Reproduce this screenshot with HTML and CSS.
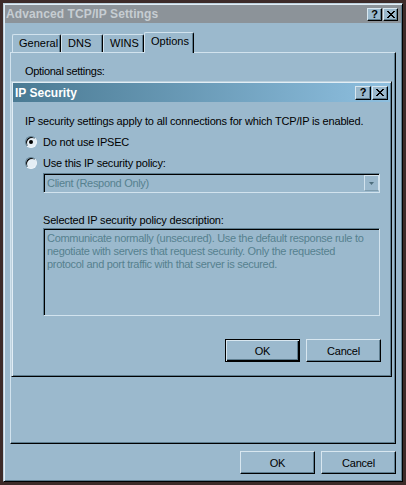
FILE: index.html
```html
<!DOCTYPE html>
<html>
<head>
<meta charset="utf-8">
<title>Advanced TCP/IP Settings</title>
<link rel="stylesheet" href="styles.css">
</head>
<body>
<div class="win main">
  <div class="titlebar">
    <span class="title">Advanced TCP/IP Settings</span>
    <div class="caps">
      <span class="cap">?</span>
      <span class="cap"><svg width="8" height="7" viewBox="0 0 8 7"><path d="M0 0h2v1h-2zM6 0h2v1h-2zM1 1h2v1h-2zM5 1h2v1h-2zM2 2h4v1h-4zM3 3h2v1h-2zM2 4h4v1h-4zM1 5h2v1h-2zM5 5h2v1h-2zM0 6h2v1h-2zM6 6h2v1h-2z" fill="#000"/></svg></span>
    </div>
  </div>
  <div class="tabs">
    <div class="tab t-general">General</div>
    <div class="tab t-dns">DNS</div>
    <div class="tab t-wins">WINS</div>
    <div class="tab t-options active">Options</div>
  </div>
  <div class="panel">
    <div class="line">Optional settings:</div>
  </div>
  <div class="footer">
    <button class="btn">OK</button>
    <button class="btn">Cancel</button>
  </div>
</div>

<div class="win dialog">
  <div class="titlebar">
    <span class="title">IP Security</span>
    <div class="caps">
      <span class="cap">?</span>
      <span class="cap"><svg width="8" height="7" viewBox="0 0 8 7"><path d="M0 0h2v1h-2zM6 0h2v1h-2zM1 1h2v1h-2zM5 1h2v1h-2zM2 2h4v1h-4zM3 3h2v1h-2zM2 4h4v1h-4zM1 5h2v1h-2zM5 5h2v1h-2zM0 6h2v1h-2zM6 6h2v1h-2z" fill="#000"/></svg></span>
    </div>
  </div>
  <div class="dbody">
    <div class="line wide">IP security settings apply to all connections for which TCP/IP is enabled.</div>
    <div class="radio-row first"><span class="radio on"></span><span>Do not use IPSEC</span></div>
    <div class="radio-row"><span class="radio"></span><span>Use this IP security policy:</span></div>
    <div class="combo">
      <span class="combo-text">Client (Respond Only)</span>
      <span class="combo-btn"><svg width="5" height="3" viewBox="0 0 5 3"><path d="M0 0h5l-2.5 3z" fill="#4d6d7c"/></svg></span>
    </div>
    <div class="line label wide">Selected IP security policy description:</div>
    <div class="desc">Communicate normally (unsecured). Use the default response rule to<br>negotiate with servers that request security. Only the requested<br>protocol and port traffic with that server is secured.</div>
    <div class="dbuttons">
      <button class="btn default">OK</button>
      <button class="btn">Cancel</button>
    </div>
  </div>
</div>
</body>
</html>
```

FILE: styles.css
```css
* { box-sizing: border-box; }
html, body { margin: 0; }
body {
  background: #3d2b29;
  padding: 3px;
  width: 406px;
  height: 485px;
  overflow: hidden;
  position: relative;
  font-family: "Liberation Sans", Arial, sans-serif;
  font-size: 11px;
  color: #000;
}

.win {
  background: #9bb9cd;
  border: 1px solid;
  border-color: #bcd0dc #000 #000 #bcd0dc;
  box-shadow: inset 1px 1px #e2eef6, inset -1px -1px #5e7d8f;
  padding: 1px;
}

.main {
  width: 400px;
  height: 479px;
  display: flex;
  flex-direction: column;
}

.titlebar {
  flex: none;
  height: 18px;
  display: flex;
  align-items: center;
  justify-content: space-between;
  padding: 0 3px 0 1px;
  background: #8c9399;
}
.title {
  font-weight: bold;
  font-size: 12px;
  line-height: 14px;
  color: #c6cdd2;
  white-space: nowrap;
  letter-spacing: 0.1px;
}

.caps { display: flex; gap: 1px; }
.cap {
  width: 15px;
  height: 13px;
  background: #9bb9cd;
  border: 1px solid;
  border-color: #d8e7f0 #000 #000 #d8e7f0;
  box-shadow: inset -1px -1px #5e7d8f;
  display: flex;
  align-items: center;
  justify-content: center;
  font-weight: bold;
  font-size: 11px;
  line-height: 11px;
  color: #000;
}

.tabs {
  flex: none;
  height: 20px;
  margin-top: 9px;
  padding-left: 7px;
  display: flex;
  align-items: flex-end;
  position: relative;
  z-index: 1;
}
.tab {
  height: 18px;
  background: #9bb9cd;
  border: 1px solid #d2e3ee;
  border-bottom: none;
  border-right-color: #000;
  box-shadow: inset -1px 0 #5e7d8f;
  border-radius: 2px 2px 0 0;
  padding: 0 0 0 6px;
  line-height: 16px;
  white-space: nowrap;
}
.t-general { width: 49px; }
.t-dns { width: 42px; padding-left: 6px; }
.t-wins { width: 41px; }
.t-options { width: 50px; }
.tab.active {
  height: 21px;
  margin-bottom: -1px;
}

.panel {
  flex: none;
  height: 392px;
  margin: 0 5px;
  border: 1px solid;
  border-color: #d2e3ee #000 #000 #d2e3ee;
  box-shadow: inset -1px -1px #5e7d8f;
  padding: 12px 0 0 14px;
}

.line { line-height: 13px; white-space: nowrap; letter-spacing: -0.3px; }
.line.wide { letter-spacing: -0.17px; }

.footer {
  flex: none;
  display: flex;
  justify-content: flex-end;
  gap: 6px;
  margin-top: 7px;
  padding-right: 5px;
}

.btn {
  width: 75px;
  height: 23px;
  margin: 0;
  padding: 0;
  background: #9bb9cd;
  border: 1px solid;
  border-color: #d8e7f0 #000 #000 #d8e7f0;
  box-shadow: inset -1px -1px #5e7d8f;
  font-family: inherit;
  font-size: 11px;
  color: #000;
  letter-spacing: -0.2px;
}
.btn.default {
  border: 1px solid #000;
  box-shadow: inset 1px 1px #d8e7f0, inset -1px -1px #000, inset -2px -2px #5e7d8f;
}

.dialog {
  position: absolute;
  left: 11px;
  top: 81px;
  width: 381px;
  height: 296px;
  display: flex;
  flex-direction: column;
}
.dialog .titlebar {
  height: 19px;
  padding: 0 2px 0 2px;
  background: linear-gradient(to right, #4a7a93, #8ebfdf);
}
.dialog .title { color: #fff; letter-spacing: 0; }
.dialog .cap { width: 16px; height: 14px; }

.dbody {
  padding: 13px 9px 0 12px;
  display: flex;
  flex-direction: column;
}

.radio-row {
  display: flex;
  align-items: center;
  height: 13px;
  margin-top: 8px;
  white-space: nowrap;
  letter-spacing: -0.2px;
}
.radio-row.first { margin-top: 7px; }
.radio {
  flex: none;
  width: 12px;
  height: 12px;
  margin-right: 6px;
  border-radius: 50%;
  background: #e4eef5;
  border: 1px solid;
  border-color: #5e7d8f #eef5fa #eef5fa #5e7d8f;
  box-shadow: inset 1px 1px #000;
  position: relative;
}
.radio.on::after {
  content: "";
  position: absolute;
  left: 3px;
  top: 3px;
  width: 4px;
  height: 4px;
  border-radius: 50%;
  background: #000;
}

.combo {
  margin: 4px 1px 0 18px;
  height: 20px;
  border: 1px solid;
  border-color: #5e7d8f #d2e3ee #d2e3ee #5e7d8f;
  box-shadow: inset 1px 1px #000;
  padding: 1px 0 1px 3px;
  display: flex;
  align-items: center;
  justify-content: space-between;
  color: #56818f;
  line-height: 16px;
  letter-spacing: -0.3px;
}
.combo-btn {
  width: 15px;
  height: 16px;
  border: 1px solid;
  border-color: #d2e3ee #d2e3ee #7e9cae #d2e3ee;
  display: flex;
  align-items: center;
  justify-content: center;
}

.label { margin: 21px 0 0 18px; }

.desc {
  margin: 1px 1px 0 18px;
  height: 88px;
  border: 1px solid;
  border-color: #5e7d8f #d2e3ee #d2e3ee #5e7d8f;
  box-shadow: inset 1px 1px #000;
  padding: 3px 0 0 3px;
  color: #56818f;
  line-height: 13px;
  white-space: nowrap;
  letter-spacing: -0.3px;
}

.dbuttons {
  display: flex;
  justify-content: flex-end;
  gap: 6px;
  margin-top: 23px;
}
```
